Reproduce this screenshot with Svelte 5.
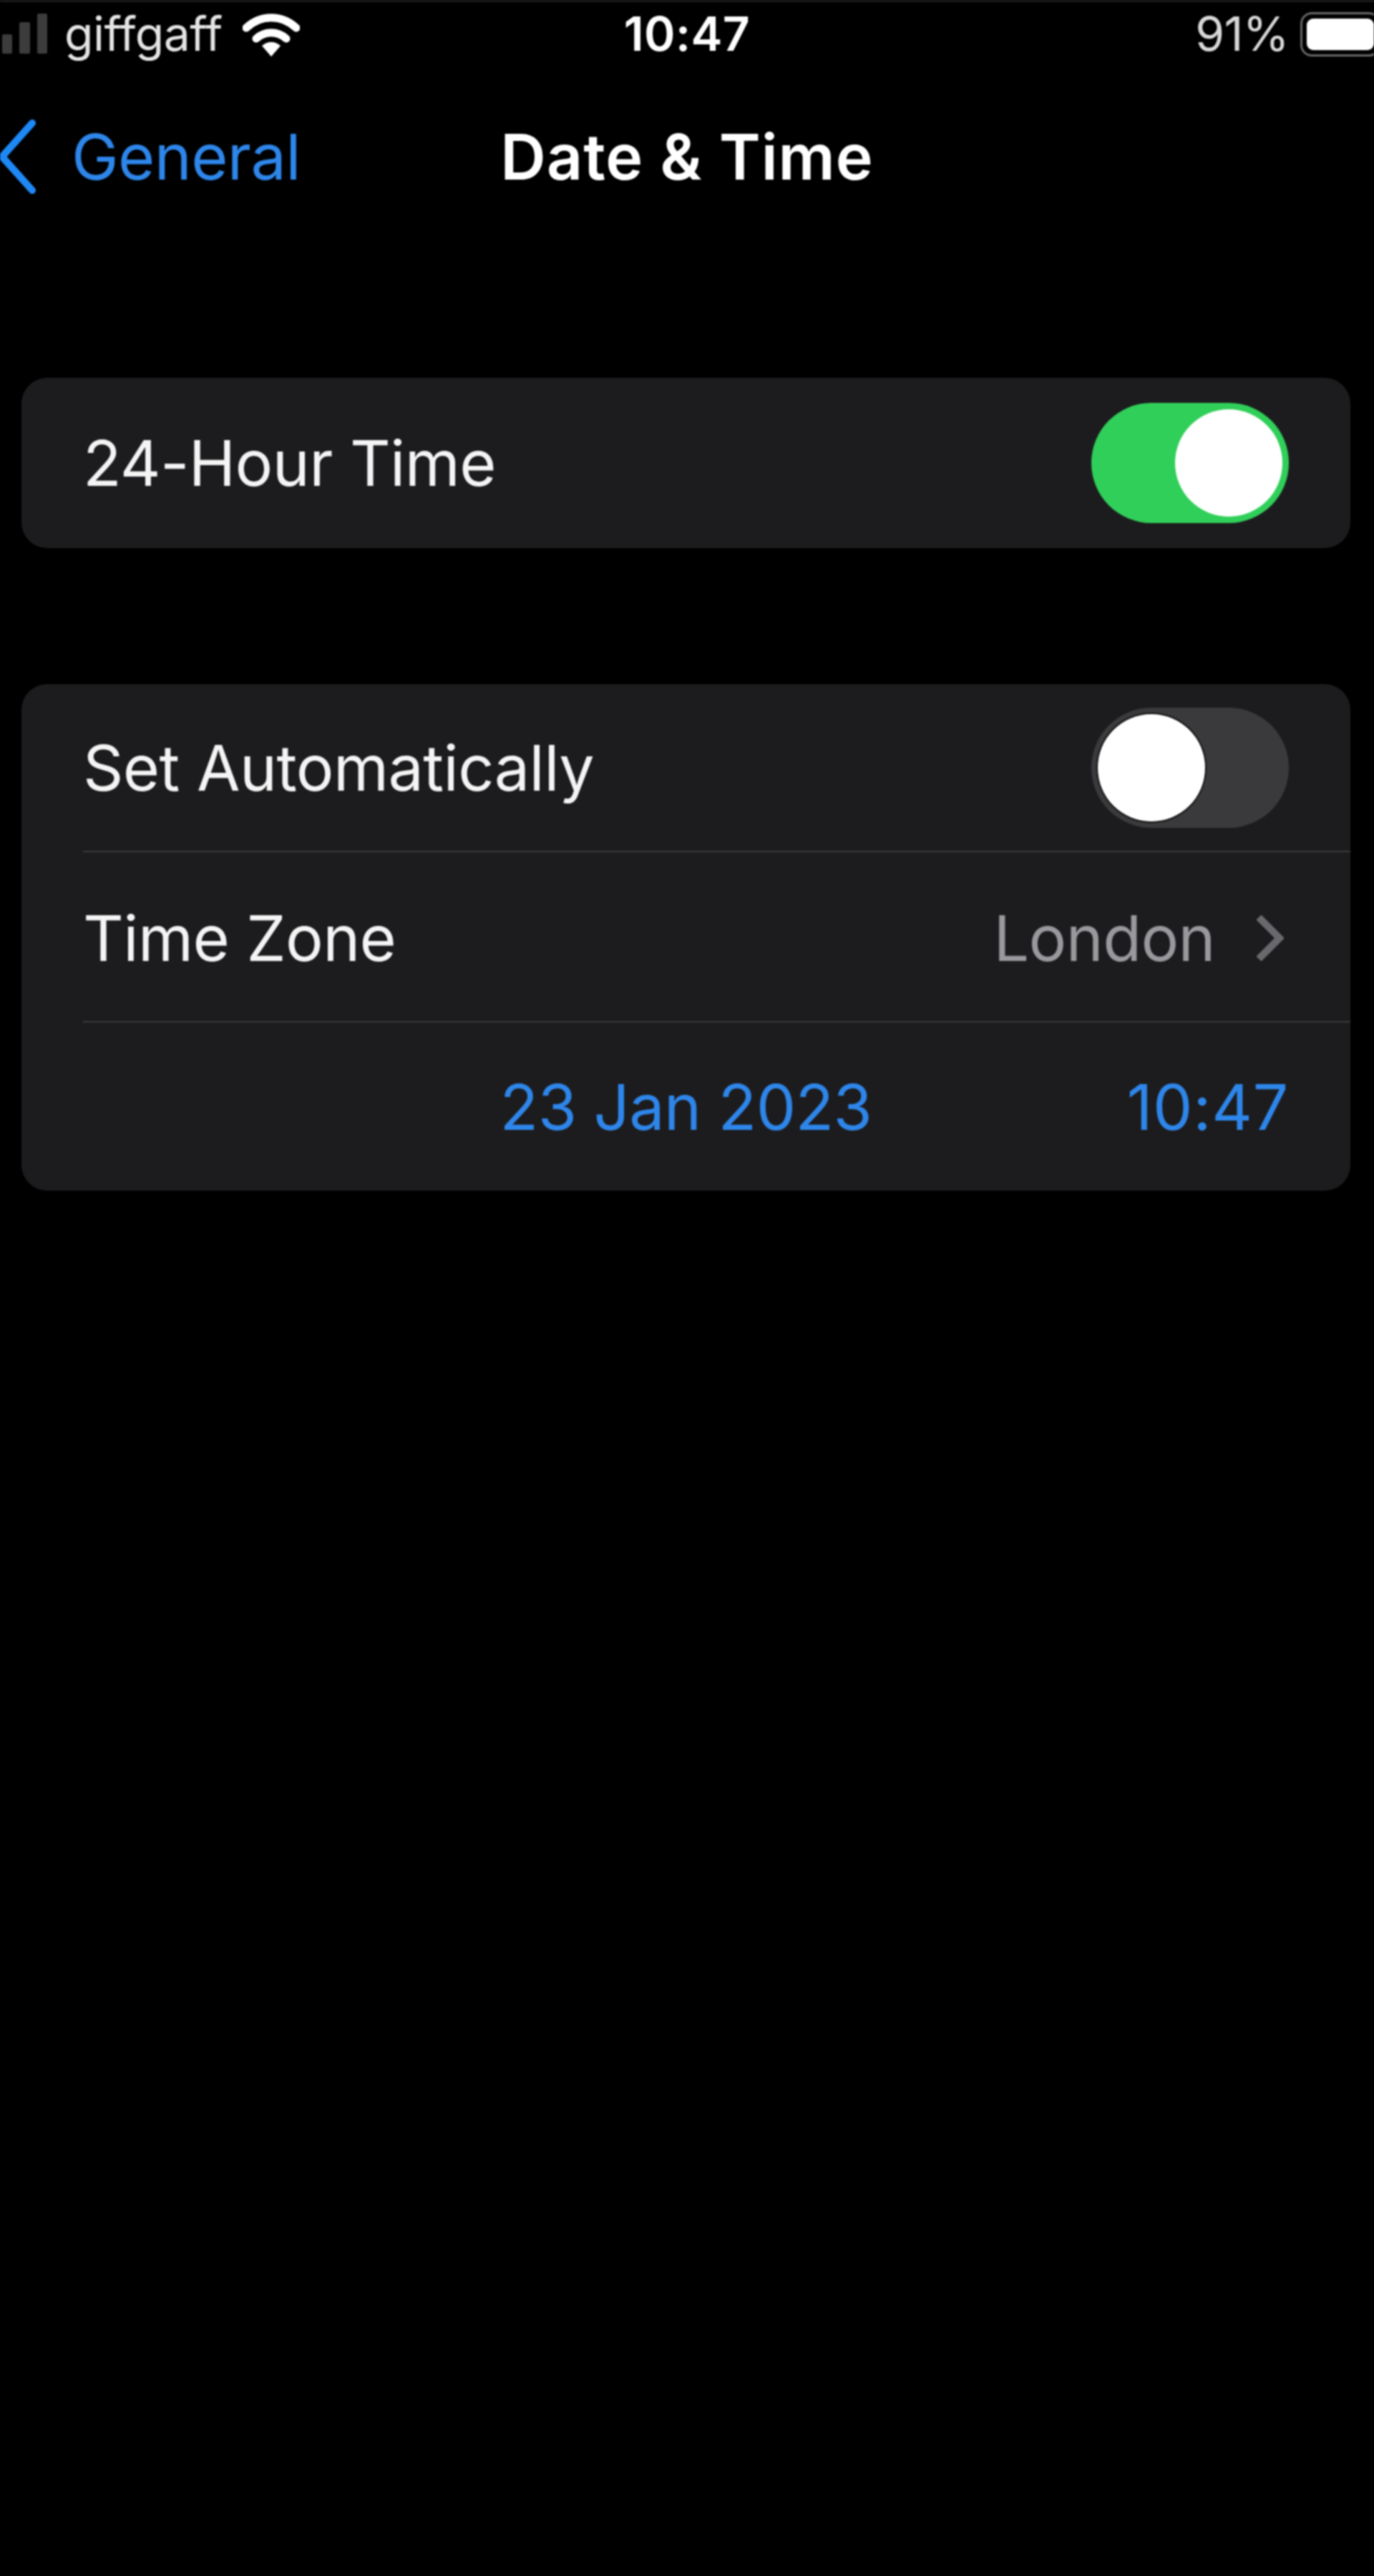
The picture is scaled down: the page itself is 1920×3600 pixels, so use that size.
<script lang="ts">
	let is24Hour = $state(true);
	let setAutomatically = $state(false);
</script>

<div class="screen">
	<header class="status">
		<div class="status__left">
			<svg class="signal" viewBox="0 0 66 58" aria-hidden="true">
				<rect x="3" y="29" width="14" height="27" rx="2" />
				<rect x="27" y="12" width="15" height="44" rx="2" />
				<rect x="52" y="0" width="14" height="56" rx="2" />
			</svg>
			<span class="carrier">giffgaff</span>
			<svg class="wifi" viewBox="0 0 80 60" aria-hidden="true">
				<path d="M5 20 C25 1 55 1 75 20" />
				<path d="M19 35 C31 24 49 24 61 35" />
				<path class="wifi__dot" d="M27 45 C35 38 45 38 53 45 L40 60 Z" />
			</svg>
		</div>
		<span class="clock">10:47</span>
		<div class="status__right">
			<span class="percent">91%</span>
			<div class="battery"><div class="battery__fill"></div></div>
		</div>
	</header>

	<nav class="nav">
		<div class="back">
			<svg class="back__icon" viewBox="0 0 52 104" aria-hidden="true">
				<path d="M47 5 L5 52 L47 99" />
			</svg>
			<span>General</span>
		</div>
		<h1>Date &amp; Time</h1>
	</nav>

	<section class="card card--first">
		<div class="row">
			<span>24-Hour Time</span>
			<button class="toggle" class:toggle--on={is24Hour} aria-label="24-Hour Time" onclick={() => (is24Hour = !is24Hour)}>
				<span class="toggle__knob"></span>
			</button>
		</div>
	</section>

	<section class="card">
		<div class="row row--short row--line">
			<span>Set Automatically</span>
			<button class="toggle" class:toggle--on={setAutomatically} aria-label="Set Automatically" onclick={() => (setAutomatically = !setAutomatically)}>
				<span class="toggle__knob"></span>
			</button>
		</div>
		<div class="row row--line row--zone">
			<span>Time Zone</span>
			<div class="value">
				<span>London</span>
				<svg class="chevron" viewBox="0 0 40 68" aria-hidden="true">
					<path d="M5 5 L34 34 L5 63" />
				</svg>
			</div>
		</div>
		<div class="row row--short row--picker">
			<span class="picker__date">23 Jan 2023</span>
			<span class="picker__time">10:47</span>
		</div>
	</section>
</div>

<style>
	:global(body) {
		margin: 0;
		background: #000;
	}

	.screen {
		height: 3600px;
		box-sizing: border-box;
		border-top: 3px solid #1c1c1c;
		background: #000;
		color: #f4f4f5;
		font-family: Inter, 'Liberation Sans', sans-serif;
		font-size: 88px;
		letter-spacing: -0.6px;
		overflow: hidden;
		filter: blur(0.8px);
	}

	.status {
		display: grid;
		grid-template-columns: 1fr auto 1fr;
		align-items: center;
		height: 88px;
		font-size: 66px;
	}

	.status__left {
		display: flex;
		align-items: center;
	}

	.signal {
		width: 66px;
		height: 58px;
		margin-top: 2px;
		fill: #3c3c3c;
	}

	.carrier {
		margin-left: 24px;
		letter-spacing: -0.5px;
		color: #e4e4e4;
	}

	.wifi {
		width: 80px;
		height: 60px;
		margin-left: 28px;
		margin-top: 4px;
		fill: none;
		stroke: #fff;
		stroke-width: 11;
		stroke-linecap: round;
	}

	.wifi__dot {
		fill: #fff;
		stroke: none;
	}

	.clock {
		font-weight: 600;
		letter-spacing: 0.4px;
		color: #fff;
	}

	.status__right {
		display: flex;
		align-items: center;
		justify-content: flex-end;
	}

	.percent {
		color: #d8d8d8;
	}

	.battery {
		flex: none;
		box-sizing: border-box;
		width: 112px;
		height: 62px;
		margin-left: 16px;
		margin-right: -9px;
		margin-top: 2px;
		padding: 6px;
		border: 3px solid #666;
		border-radius: 16px;
		display: flex;
	}

	.battery__fill {
		flex: 1;
		background: #fff;
		border-radius: 9px;
	}

	.nav {
		display: grid;
		grid-template-columns: 1fr auto 1fr;
		align-items: center;
		height: 104px;
		margin-top: 75px;
	}

	.back {
		display: flex;
		align-items: center;
		gap: 50px;
		color: #2e86ea;
	}

	.back__icon {
		flex: none;
		width: 52px;
		height: 104px;
		margin-left: -2px;
		fill: none;
		stroke: #1e88f5;
		stroke-width: 10;
		stroke-linecap: round;
		stroke-linejoin: round;
	}

	h1 {
		margin: 0;
		font-size: inherit;
		font-weight: 600;
		letter-spacing: 0.9px;
		color: #fff;
	}

	.card {
		margin: 0 33px 0 30px;
		background: #1c1c1e;
		border-radius: 36px;
	}

	.card--first {
		margin-top: 258px;
		margin-bottom: 190px;
	}

	.row {
		display: flex;
		align-items: center;
		justify-content: space-between;
		box-sizing: border-box;
		height: 238px;
		margin-left: 86px;
		padding-right: 86px;
	}

	.row--short {
		height: 235px;
	}

	.row--line {
		border-bottom: 2px solid #3a3a3c;
	}

	.row--zone {
		padding-top: 4px;
	}

	.row--picker {
		display: grid;
		grid-template-columns: 1fr auto 1fr;
		color: #2e86ea;
	}

	.picker__time {
		justify-self: end;
		grid-column: 3;
		letter-spacing: 0.6px;
	}

	.picker__date {
		grid-column: 2;
	}

	.value {
		display: flex;
		align-items: center;
		gap: 56px;
		margin-right: 7px;
		color: #98989d;
	}

	.chevron {
		width: 40px;
		height: 68px;
		fill: none;
		stroke: #69696d;
		stroke-width: 10;
	}

	.toggle {
		box-sizing: border-box;
		display: flex;
		align-items: center;
		width: 276px;
		height: 168px;
		padding: 0 9px;
		border: 0;
		border-radius: 84px;
		background: #3a3a3c;
	}

	.toggle__knob {
		width: 150px;
		height: 150px;
		border-radius: 50%;
		background: #fff;
		box-shadow: 0 0 0 2px #111;
	}

	.toggle--on {
		justify-content: flex-end;
		background: #30cf59;
	}

	.toggle--on .toggle__knob {
		box-shadow: none;
	}
</style>
